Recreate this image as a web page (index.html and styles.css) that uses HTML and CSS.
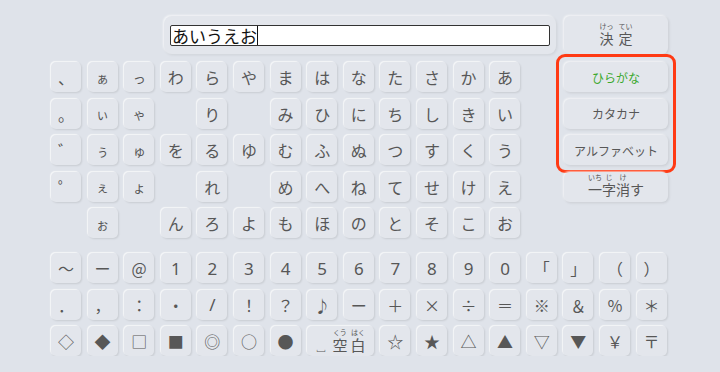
FILE: index.html
```html
<!DOCTYPE html>
<html lang="ja">
<head>
  <meta charset="UTF-8" />
  <meta name="viewport" content="width=device-width, initial-scale=1.0"/>
  <title>文字入力</title>
  <link rel="stylesheet" href="styles.css">
</head>
<body>

  <div class="screen">
    <div class="top">
      <div class="entry">
        <div class="field"><span class="typed">あいうえお</span><span class="caret"></span></div>
      </div>
      <div class="side big wide">
        <span class="rb"><span class="rt">けっ</span>決</span>
        <span class="rb"><span class="rt">てい</span>定</span>
      </div>
    </div>

    <div class="middle">
      <div class="kana">
        <div class="key">、</div><div class="key sm">ぁ</div><div class="key sm">っ</div><div class="key">わ</div><div class="key">ら</div><div class="key">や</div><div class="key">ま</div><div class="key">は</div><div class="key">な</div><div class="key">た</div><div class="key">さ</div><div class="key">か</div><div class="key">あ</div>

        <div class="key">。</div><div class="key sm">ぃ</div><div class="key sm">ゃ</div><div class="none"></div><div class="key">り</div><div class="none"></div><div class="key">み</div><div class="key">ひ</div><div class="key">に</div><div class="key">ち</div><div class="key">し</div><div class="key">き</div><div class="key">い</div>

        <div class="key">゛</div><div class="key sm">ぅ</div><div class="key sm">ゅ</div><div class="key">を</div><div class="key">る</div><div class="key">ゆ</div><div class="key">む</div><div class="key">ふ</div><div class="key">ぬ</div><div class="key">つ</div><div class="key">す</div><div class="key">く</div><div class="key">う</div>

        <div class="key">゜</div><div class="key sm">ぇ</div><div class="key sm">ょ</div><div class="none"></div><div class="key">れ</div><div class="none"></div><div class="key">め</div><div class="key">へ</div><div class="key">ね</div><div class="key">て</div><div class="key">せ</div><div class="key">け</div><div class="key">え</div>

        <div class="none"></div><div class="key sm">ぉ</div><div class="none"></div><div class="key">ん</div><div class="key">ろ</div><div class="key">よ</div><div class="key">も</div><div class="key">ほ</div><div class="key">の</div><div class="key">と</div><div class="key">そ</div><div class="key">こ</div><div class="key">お</div>
      </div>

      <div class="modes">
        <div class="picked">
          <div class="side on">ひらがな</div>
          <div class="side">カタカナ</div>
          <div class="side">アルファベット</div>
        </div>
        <div class="side big">
          <span class="rb"><span class="rt">いち</span>一</span><span class="rb"><span class="rt">じ</span>字</span><span class="rb"><span class="rt">け</span>消</span><span class="rb"><span class="rt">&nbsp;</span>す</span>
        </div>
      </div>
    </div>

    <div class="symbols">
      <div class="key">～</div><div class="key">ー</div><div class="key">@</div><div class="key num">1</div><div class="key num">2</div><div class="key num">3</div><div class="key num">4</div><div class="key num">5</div><div class="key num">6</div><div class="key num">7</div><div class="key num">8</div><div class="key num">9</div><div class="key num">0</div><div class="key">「</div><div class="key">」</div><div class="key">（</div><div class="key">）</div>

      <div class="key">．</div><div class="key">，</div><div class="key">：</div><div class="key">・</div><div class="key num">/</div><div class="key">！</div><div class="key">？</div><div class="key">♪</div><div class="key">ー</div><div class="key">＋</div><div class="key">×</div><div class="key">÷</div><div class="key">＝</div><div class="key">※</div><div class="key">＆</div><div class="key">％</div><div class="key">＊</div>

      <div class="key">◇</div><div class="key">◆</div><div class="key">□</div><div class="key">■</div><div class="key">◎</div><div class="key">○</div><div class="key">●</div>
      <div class="key space">
        <span class="blank">␣</span>
        <span class="rb"><span class="rt">くう</span>空</span>
        <span class="rb"><span class="rt">はく</span>白</span>
      </div>
      <div class="key">☆</div><div class="key">★</div><div class="key">△</div><div class="key">▲</div><div class="key">▽</div><div class="key">▼</div><div class="key">￥</div><div class="key">〒</div>
    </div>
  </div>

</body>
</html>
```

FILE: styles.css
```css
* {
  box-sizing: border-box;
}
body {
  margin: 0;
  padding: 16px 0 0 51px;
  background: #dfe3ea;
  font-family: 'Noto Sans CJK JP', 'Noto Sans', sans-serif;
  color: #575757;
}
.screen {
  width: 617px;
}
.top {
  display: flex;
  justify-content: flex-end;
  gap: 8px;
  height: 38px;
}
.entry {
  width: 392px;
  display: flex;
  align-items: center;
  padding: 0 6px;
  background: #e3e6ec;
  border-radius: 8px;
  box-shadow: 1px 1px 3px rgba(0, 0, 0, 0.08), -1px -1px 2px rgba(255, 255, 255, 0.7);
}
.field {
  width: 100%;
  height: 21px;
  background: #fff;
  border: 1px solid #333;
  border-radius: 2px;
  display: flex;
  align-items: center;
  padding-left: 1px;
}
.typed {
  font-size: 17px;
  line-height: 19px;
  color: #111;
}
.caret {
  width: 1px;
  height: 19px;
  background: #111;
}
.side {
  width: 104px;
  height: 30px;
  display: flex;
  align-items: center;
  justify-content: center;
  font-size: 12px;
  background: #e3e6ec;
  border-radius: 6px;
  box-shadow: 1px 1px 3px rgba(0, 0, 0, 0.1), -1px -1px 2px rgba(255, 255, 255, 0.7);
}
.side.big {
  font-size: 14px;
  align-items: flex-end;
  padding-bottom: 5px;
}
.side.wide {
  gap: 5px;
  padding-bottom: 8px;
}
.top .side {
  height: 38px;
}
.side.on {
  color: #3aa82c;
}
.rb {
  display: inline-flex;
  flex-direction: column;
  align-items: center;
  line-height: 15px;
}
.rt {
  font-size: 7px;
  line-height: 8px;
  margin-bottom: 1px;
}
.middle {
  display: flex;
  justify-content: space-between;
  margin-top: 8px;
}
.kana {
  display: grid;
  grid-template-columns: repeat(13, 30px);
  grid-auto-rows: 30px;
  gap: 6.5px 6.6px;
}
.symbols {
  display: grid;
  grid-template-columns: repeat(17, 30px);
  grid-auto-rows: 30px;
  gap: 6.5px 6.6px;
  margin-top: 15px;
}
.key {
  display: flex;
  align-items: center;
  justify-content: center;
  font-size: 16px;
  background: #e3e6ec;
  border-radius: 5px;
  box-shadow: 1px 1px 2px rgba(0, 0, 0, 0.1), -1px -1px 1px rgba(255, 255, 255, 0.7);
}
.key.sm {
  font-size: 13px;
}
.key.num {
  font-family: 'Noto Sans', sans-serif;
  font-size: 17px;
}
.key.space {
  grid-column: span 2;
  font-size: 15px;
  align-items: flex-end;
  gap: 3px;
  padding-bottom: 4px;
}
.blank {
  font-size: 11px;
  line-height: 12px;
  margin-right: 3px;
}
.modes {
  width: 104px;
  display: flex;
  flex-direction: column;
  gap: 6.5px;
}
.picked {
  display: flex;
  flex-direction: column;
  gap: 6.5px;
  margin: -8px;
  padding: 5px;
  border: 3px solid #ff3a14;
  border-radius: 9px;
}
```
